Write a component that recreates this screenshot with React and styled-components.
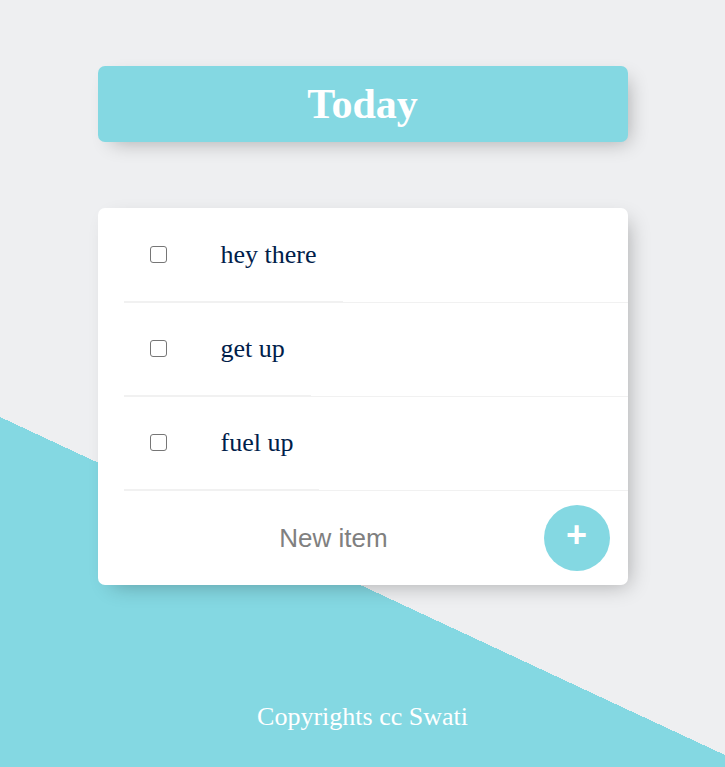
import React from "react";
import styled, { createGlobalStyle } from "styled-components";

const GlobalStyle = createGlobalStyle`
  *, *::before, *::after { box-sizing: border-box; }
  body { margin: 0; }
`;

const Page = styled.div`
  display: flex;
  flex-direction: column;
  align-items: center;
  gap: 66px;
  min-height: 100vh;
  padding: 66px 26px 35px;
  background: #eeeff1 linear-gradient(25deg, #84d8e2 50%, #eeeff1 50%) top / 100% 1172px no-repeat;
  font-family: "Liberation Serif", "Times New Roman", serif;
  font-size: 26px;
`;

const Panel = styled.section`
  width: 100%;
  max-width: 530px;
  border-radius: 7px;
  background: ${({ $tone }) => ($tone === "accent" ? "#84d8e2" : "#ffffff")};
  box-shadow: 7px 7px 20px -7px rgba(0, 0, 0, 0.3);
`;

const Title = styled.h1`
  margin: 0;
  padding: 14px;
  color: #ffffff;
  font-size: 42px;
  line-height: 48px;
  text-align: center;
`;

const List = styled.ul`
  margin: 0;
  padding: 1px 0 0 26px;
  list-style: none;
`;

const Row = styled.li`
  display: flex;
  border-bottom: 1px solid #f1f1f1;
`;

const Item = styled.label`
  display: flex;
  align-items: center;
  min-height: 93px;
  padding: 0 26px;
  border-bottom: 1px solid #f1f1f1;
  color: #00204a;
  line-height: 30px;
`;

const Checkbox = styled.input`
  appearance: none;
  width: 17px;
  height: 17px;
  margin: 0 54px 2px 0;
  border: 1px solid #767676;
  border-radius: 3px;
  background: #ffffff;

  &:checked {
    background: #84d8e2;
    box-shadow: inset 0 0 0 3px #ffffff;
  }
`;

const NewItemForm = styled.form`
  display: flex;
  align-items: center;
  min-height: 94px;
  padding: 0 18px 0 26px;
`;

const NewItemInput = styled.input`
  flex: 1;
  min-width: 0;
  height: 60px;
  padding: 0;
  border: 0;
  outline: 0;
  background: transparent;
  color: #00204a;
  font-family: "Liberation Sans", Arial, sans-serif;
  font-size: 26px;
  text-align: center;

  &::placeholder {
    color: #808080;
  }
`;

const AddButton = styled.button`
  flex: none;
  width: 66px;
  height: 66px;
  padding: 0 0 6px;
  border: 0;
  border-radius: 50%;
  background: #84d8e2;
  color: #ffffff;
  font-family: "Liberation Sans", Arial, sans-serif;
  font-size: 36px;
  font-weight: 700;
  line-height: 46px;
  cursor: pointer;
`;

const Footer = styled.footer`
  margin-top: auto;
  color: #ffffff;
  line-height: 30px;
  text-align: center;
`;

const tasks = ["hey there", "get up", "fuel up"];

export default function App() {
  return (
    <>
      <GlobalStyle />
      <Page>
        <Panel $tone="accent">
          <Title>Today</Title>
        </Panel>
        <Panel>
          <List>
            {tasks.map((task) => (
              <Row key={task}>
                <Item>
                  <Checkbox type="checkbox" />
                  {task}
                </Item>
              </Row>
            ))}
          </List>
          <NewItemForm onSubmit={(event) => event.preventDefault()}>
            <NewItemInput type="text" placeholder="New item" aria-label="New item" autoComplete="off" />
            <AddButton type="submit" aria-label="Add item">+</AddButton>
          </NewItemForm>
        </Panel>
        <Footer>Copyrights cc Swati</Footer>
      </Page>
    </>
  );
}
